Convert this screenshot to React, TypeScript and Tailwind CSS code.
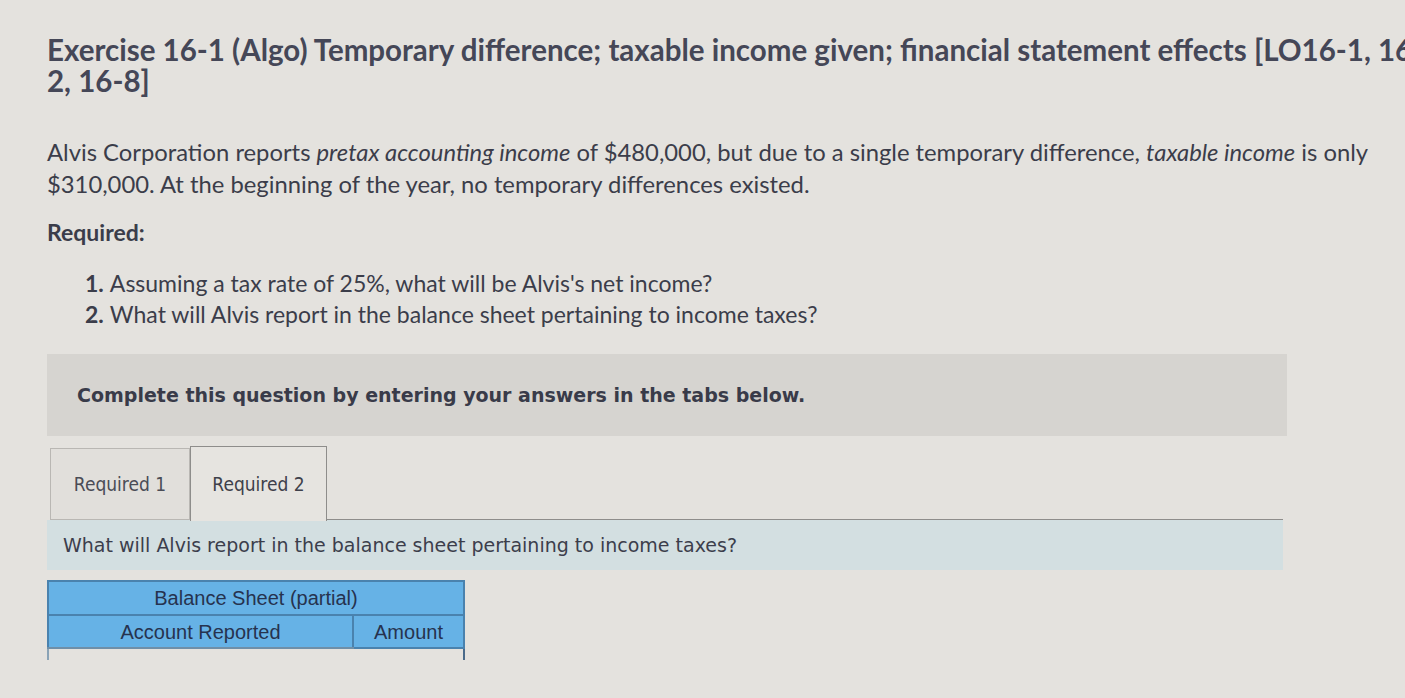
export default function App() {
  return (
    <div className="h-[698px] w-[1405px] overflow-hidden bg-[#e4e2de] text-[#3b3d4a]" style={{ fontFamily: 'Lato, "Open Sans", sans-serif' }}>
      <div className="pl-[47px] pt-[34px]">
        <h1 className="whitespace-nowrap text-[29.5px] font-bold leading-[31px] text-[#454757]">
          Exercise 16-1 (Algo) Temporary difference; taxable income given; financial statement effects [LO16-1, 16-
          <br />
          2, 16-8]
        </h1>

        <p className="mt-[40px] whitespace-nowrap text-[23.8px] leading-[32px]">
          Alvis Corporation reports <i>pretax accounting income</i> of $480,000, but due to a single temporary difference, <i>taxable income</i> is only
          <br />
          $310,000. At the beginning of the year, no temporary differences existed.
        </p>

        <div className="mt-[16px] text-[23px] font-bold leading-[32px]">Required:</div>

        <ol className="mt-[20px] pl-[38px] text-[23px] leading-[31px]">
          <li className="flex gap-[6px]">
            <span className="font-bold">1.</span>
            <span>Assuming a tax rate of 25%, what will be Alvis's net income?</span>
          </li>
          <li className="flex gap-[6px]">
            <span className="font-bold">2.</span>
            <span>What will Alvis report in the balance sheet pertaining to income taxes?</span>
          </li>
        </ol>

        <div
          className="mt-[24px] flex h-[82px] w-[1240px] items-center bg-[#d6d4d0] pl-[30px] text-[19px] font-bold text-[#393b49]"
          style={{ fontFamily: '"DejaVu Sans", Verdana, sans-serif' }}
        >
          Complete this question by entering your answers in the tabs below.
        </div>

        <div className="mt-[10px] w-[1236px]" style={{ fontFamily: '"DejaVu Sans Condensed", "DejaVu Sans", sans-serif' }}>
          <div className="flex items-end">
            <div className="ml-[3px] flex h-[72px] w-[140px] items-center justify-center border border-[#b9b7b3] bg-[#e1dfdb] text-[19px] text-[#4a4c56]">
              Required 1
            </div>
            <div className="relative -mb-px flex h-[75px] w-[137px] items-center justify-center border border-b-0 border-[#8e8d8b] bg-[#e6e4e0] text-[19px] text-[#3e404a]">
              Required 2
            </div>
            <div className="flex-1 border-b border-[#8e8d8b]" />
          </div>

          <div
            className="flex h-[50px] items-center bg-[#d3dfe1] pl-[16px] text-[19px] text-[#3c3e4c]"
            style={{ fontFamily: '"DejaVu Sans", Verdana, sans-serif' }}
          >
            What will Alvis report in the balance sheet pertaining to income taxes?
          </div>

          <table className="mt-[10px] w-[418px] border-collapse text-[20px] text-[#26334f]" style={{ fontFamily: '"Liberation Sans", Arial, sans-serif' }}>
            <thead>
              <tr>
                <th colSpan={2} className="h-[34px] border-2 border-[#4a82ae] bg-[#66b2e6] font-normal">
                  Balance Sheet (partial)
                </th>
              </tr>
              <tr>
                <th className="h-[33px] w-[305px] border-2 border-b-[#6f8fa8] border-[#4a82ae] border-b-dashed bg-[#66b2e6] font-normal">Account Reported</th>
                <th className="h-[33px] border-2 border-[#4a82ae] bg-[#66b2e6] font-normal">Amount</th>
              </tr>
            </thead>
            <tbody>
              <tr>
                <td className="h-[12px] border-l-2 border-[#8aa3b6]" />
                <td className="h-[12px] border-r-2 border-[#4a6a8a]" />
              </tr>
            </tbody>
          </table>
        </div>
      </div>
    </div>
  );
}
